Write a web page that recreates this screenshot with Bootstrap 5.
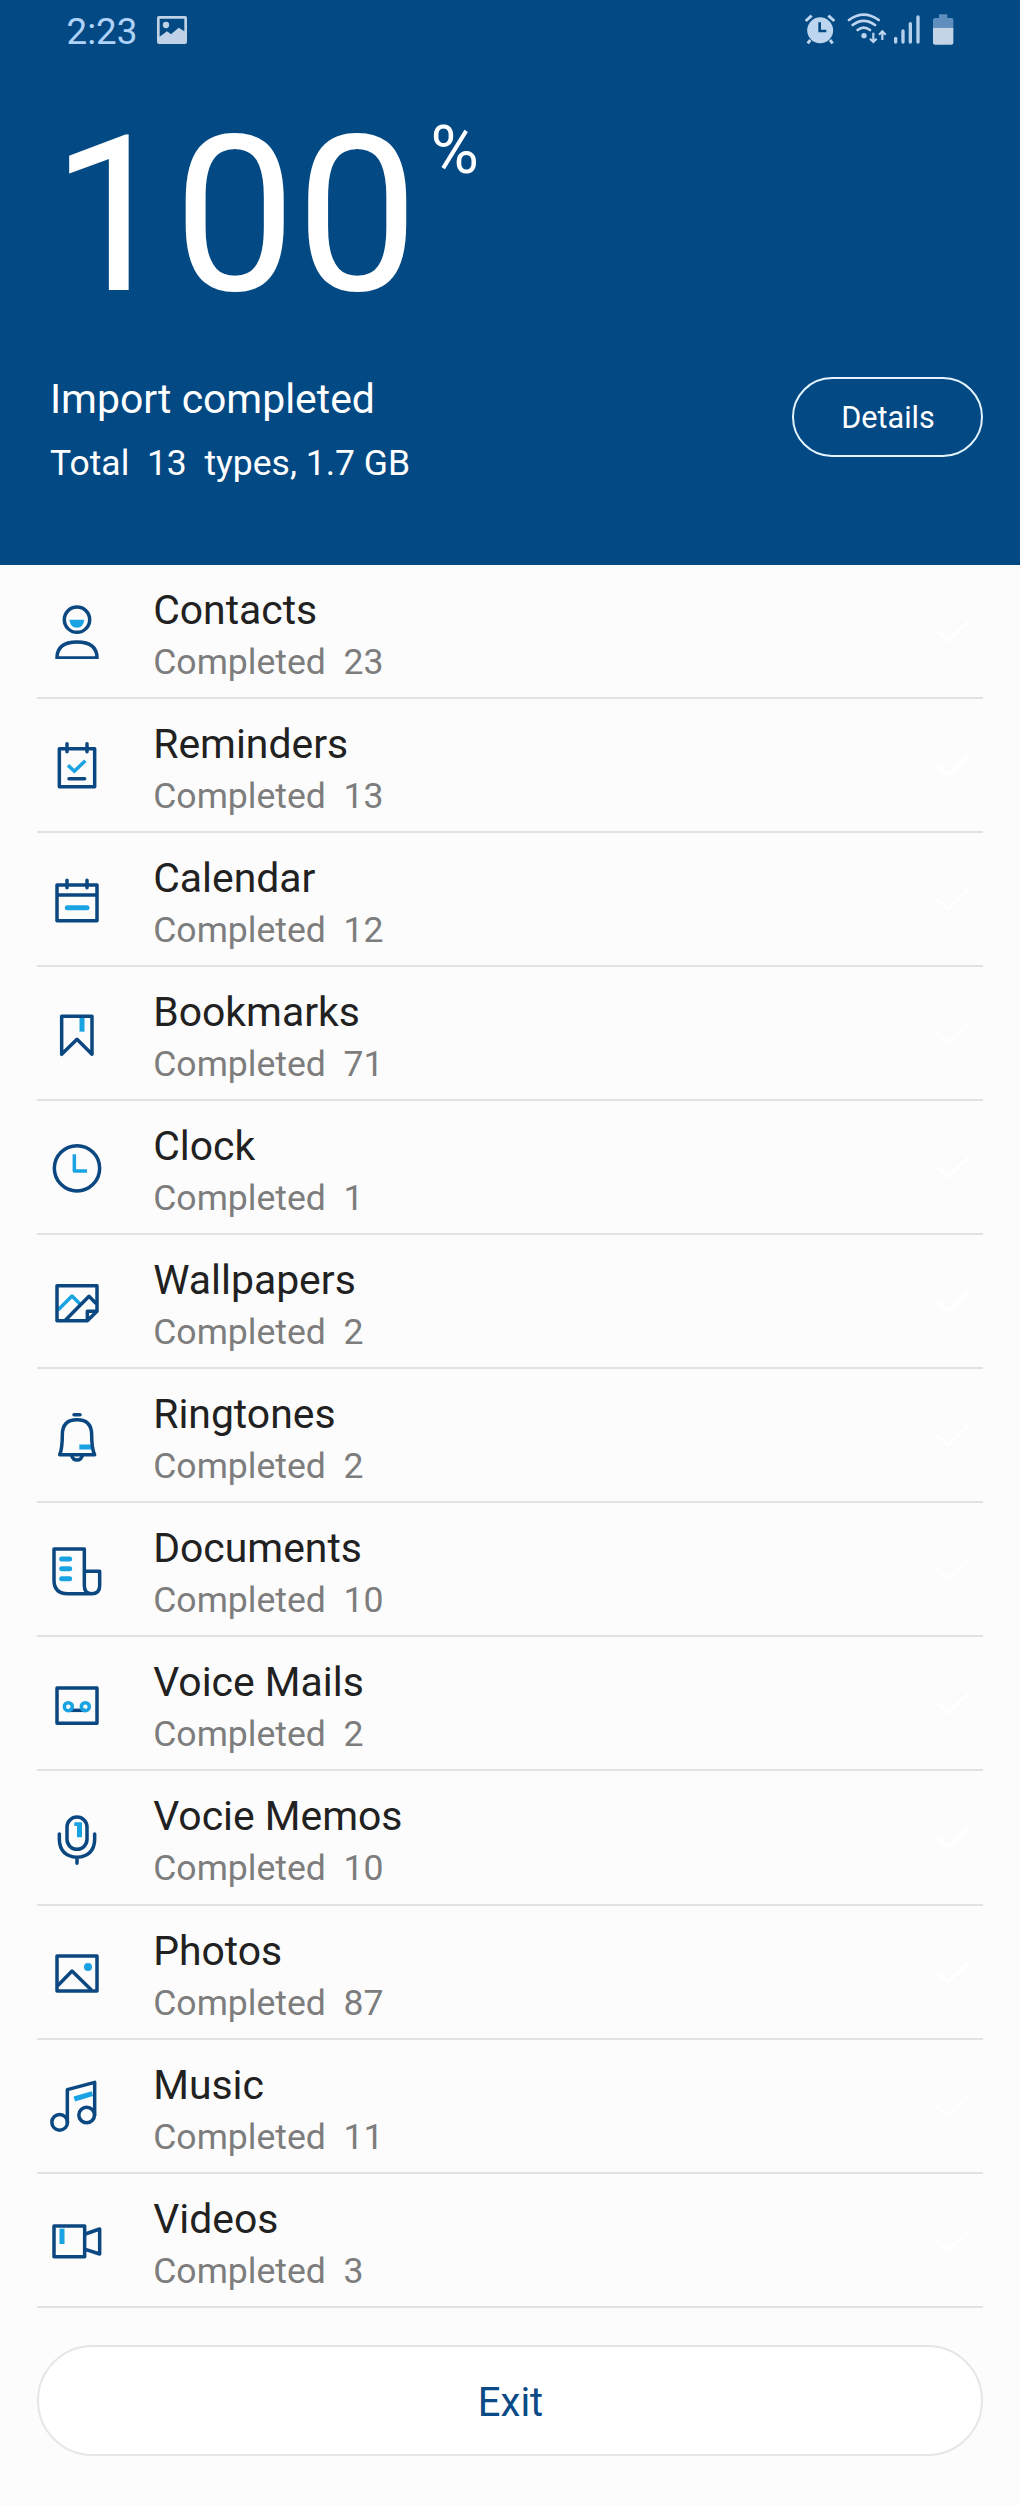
<!DOCTYPE html>
<html lang="en">
<head>
<meta charset="utf-8">
<meta name="viewport" content="width=device-width, initial-scale=1">
<title>Import completed</title>
<link href="https://cdn.jsdelivr.net/npm/bootstrap@5.3.0/dist/css/bootstrap.min.css" rel="stylesheet">
<style>
  body { font-family: Roboto, "Liberation Sans", sans-serif; background: #fcfcfc; overflow-x: hidden; }
  svg { display: block; flex: none; }
  .hero { background: #034984; color: #fff; height: 564.5px; }
  .status-bar { height: 63px; padding: 0 66px 0 66.5px; color: #aed2f8; }
  .clock-text { font-size: 36.8px; line-height: 63px; }
  .status-icons { padding-top: 13.3px; }
  .status-icons .wifi { margin-left: 11px; }
  .status-icons .bars { margin-left: 6.6px; }
  .status-icons .battery { margin-left: 10.7px; }
  .pic-icon { margin: 15.7px 0 0 19.4px; }
  .percent { padding-left: 51px; margin-top: 43px; }
  .percent-num { font-size: 218px; line-height: 220px; }
  .percent-sign { font-size: 66px; line-height: 66px; margin: 12px 0 0 12px; }
  .summary { padding: 0 37px 0 50px; margin-top: 46px; }
  .summary-title { font-size: 40.9px; line-height: 54px; }
  .summary-total { font-size: 35.5px; line-height: 50px; margin-top: 12px; white-space: pre; }
  .btn-details { --bs-btn-color: #fff; --bs-btn-border-color: #e4f4ff; --bs-btn-border-width: 2px; --bs-btn-font-size: 30.6px;
    width: 191px; height: 80px; margin-top: 5.3px; padding: 3px 0 0 1px; line-height: 1.2; }
  .type-list { padding: 0 37px; }
  .type-row { height: 134.12px; border: 0; border-bottom: 2px solid #e2e2e2; background: transparent; padding: 18px 12px 0 12px; }
  .type-row > .type-icon { width: 56px; height: 56px; margin: 20.5px 48.2px 0 0; }
  .type-name { font-size: 40.9px; line-height: 54px; color: #212121; }
  .type-state { font-size: 35.6px; line-height: 50.4px; color: #7d7d7d; white-space: pre; }
  .type-check { margin-top: 35px; }
  .type-icon { fill: none; stroke: #0b4780; stroke-width: 10.5; stroke-linejoin: round; stroke-linecap: butt; }
  .type-icon .hi { stroke: #1aa3e2; }
  .type-icon .wide { stroke-width: 15; }
  .type-icon .hi-fill { fill: #1aa3e2; stroke: none; }
  .rc { stroke-linecap: round; }
  .footer-bar { padding: 37px 37px 50px; }
  .btn-exit { --bs-btn-color: #0a4a86; --bs-btn-bg: #fff; --bs-btn-border-color: #e6e6e6; --bs-btn-border-width: 2px; --bs-btn-font-size: 40px;
    height: 111px; padding: 6px 0 0 1px; line-height: 1.2; }
</style>
</head>
<body>
<header class="hero d-flex flex-column">
  <div class="status-bar d-flex justify-content-between align-items-start">
    <div class="d-flex align-items-start">
      <span class="clock-text">2:23</span>
      <svg class="pic-icon" width="30" height="28" viewBox="0 0 90 84"><path fill="#bfd2e6" fill-rule="evenodd" d="M6 0H84Q90 0 90 6V78Q90 84 84 84H6Q0 84 0 78V6Q0 0 6 0ZM8 8V62L30 46L42 55L65 35L82 46V8Z"/><circle cx="27" cy="27" r="9.5" fill="#bfd2e6"/></svg>
    </div>
    <div class="status-icons d-flex">
      <svg width="32" height="32" viewBox="71 40 96 96"><g fill="none" stroke="#bdd5ee" stroke-width="9"><path d="M76 64L94 48M162 64L144 48M90 121L82 131M149 121L157 131"/></g><circle cx="119.500" cy="92" r="39" fill="#bdd5ee"/><path d="M118 68V94H138" fill="none" stroke="#034984" stroke-width="8"/></svg>
      <svg class="wifi" width="40" height="32" viewBox="200 40 120 96"><g fill="none" stroke="#bdd5ee" stroke-width="8" stroke-linecap="round"><path d="M206 61Q250 29 295 61M217 76Q250 51 284 76M232 91Q250 77 269 91"/></g><circle cx="251" cy="108" r="8" fill="#bdd5ee"/><path d="M279 99V126M269 117L279 127L289 117M306 121V96M296 105L306 95L316 105" fill="none" stroke="#bdd5ee" stroke-width="6.500"/></svg>
      <svg class="bars" width="28" height="32" viewBox="340 40 84 96"><path d="M348 116V127M370 94V127M392 72V127M415 52V127" stroke="#b4d0ed" stroke-width="10" stroke-linecap="round"/></svg>
      <svg class="battery" width="22" height="32" viewBox="456 40 66 96"><path d="M477 44H502V55H514Q520 55 520 61V84H459V61Q459 55 465 55H477Z" fill="#5f8fbe"/><path d="M459 84H520V129Q520 135 514 135H465Q459 135 459 129Z" fill="#c3d4e6"/></svg>
    </div>
  </div>
  <div class="percent d-flex align-items-start">
    <span class="percent-num">100</span><span class="percent-sign">%</span>
  </div>
  <div class="summary d-flex justify-content-between align-items-start">
    <div>
      <div class="summary-title">Import completed</div>
      <div class="summary-total">Total  13  types, 1.7 GB</div>
    </div>
    <button type="button" class="btn btn-details rounded-pill">Details</button>
  </div>
</header>

<main class="type-list list-group rounded-0" id="typeList"></main>

<footer class="footer-bar">
  <button type="button" class="btn btn-exit rounded-pill w-100">Exit</button>
</footer>

<script>
  // name, item count, top of the icon's drawing area, icon shapes
  const types = [
    ['Contacts', 23, 67, '<circle cx="140" cy="117" r="38"/><path d="M80 232Q80 184 140 184Q200 184 200 232Z"/><path class="hi-fill" d="M117 117H162Q159 141 140 141Q120 141 117 117Z"/>'],
    ['Reminders', 13, 470, '<path d="M87 505H193V619H87Z"/><path class="rc" d="M110 490V514M170 490V514M116 595H163"/><path class="hi" d="M113 555L132 573L165 541"/>'],
    ['Calendar', 12, 872, '<path d="M80 914H200V1021H80ZM80 944H200"/><path class="rc" d="M110 900V922M170 900V922"/><path class="hi wide rc" d="M111 982H170"/>'],
    ['Bookmarks', 71, 1275, '<path class="hi wide" d="M155 1312V1355"/><path d="M94 1309H185V1423L140 1378L94 1423Z"/>'],
    ['Clock', 1, 117, '<circle cx="140" cy="205" r="68"/><path class="hi" d="M132 163V213H170"/>'],
    ['Wallpapers', 2, 519, '<path class="hi" d="M83 627L125 585L149 609"/><path d="M105 658L176 586L198 608"/><path d="M80 554H200V631L171 659H80ZM200 631H171V659"/>'],
    ['Ringtones', 2, 922, '<path class="rc" d="M131 942H149"/><path class="hi wide" d="M147 1039H183"/><path d="M88 1062Q96 1044 96 1002Q96 957 140 957Q184 957 184 1002Q184 1044 193 1062Z"/><path d="M124 1064Q127 1078 140 1078Q153 1078 156 1064"/>'],
    ['Documents', 10, 124, '<path d="M71 145H162V255Q162 279 184 279H112Q71 279 71 238ZM162 212H208V255Q208 279 184 279"/><path class="hi wide rc" d="M94 175H118M94 204H118M94 234H118"/>'],
    ['Voice Mails', 2, 526, '<path d="M80 562H200V668H80Z"/><path d="M116 629H165"/><circle class="hi" cx="114" cy="618" r="12"/><circle class="hi" cx="165" cy="618" r="12"/>'],
    ['Vocie Memos', 10, 928, '<rect x="110" y="949" width="60" height="97" rx="30"/><path class="rc" d="M87 1000V1018Q89 1066 140 1070Q191 1066 193 1018V1000M140 1070V1088"/><path class="hi-fill" d="M132 965H155V1010H140V976H132Z"/>'],
    ['Photos', 87, 131, '<path d="M80 167H200V272H80Z"/><path d="M82 256L125 212L184 270"/><circle class="hi-fill" cx="173" cy="200" r="12"/>'],
    ['Music', 11, 533, '<path class="hi wide" d="M132 596L186 580"/><circle cx="88" cy="666" r="23.500"/><circle cx="169" cy="644" r="23.500"/><path d="M111 668V568L193 546V646"/>'],
    ['Videos', 3, 935, '<path d="M71 977H163V1069H71ZM165 1001L208 986V1061L165 1047"/><path class="hi wide" d="M95 985V1031"/>']
  ];
  document.getElementById('typeList').innerHTML = types.map(([name, count, top, shapes]) => `
    <div class="type-row list-group-item d-flex align-items-start">
      <svg class="type-icon" viewBox="56 ${top} 168 168">${shapes}</svg>
      <div class="flex-grow-1">
        <div class="type-name">${name}</div>
        <div class="type-state">Completed  ${count}</div>
      </div>
      <svg class="type-check" width="36" height="27" viewBox="0 0 36 27"><path d="M2 13L13 23L34 3" fill="none" stroke="#fff" stroke-width="3.500"/></svg>
    </div>`).join('');
</script>
<script src="https://cdn.jsdelivr.net/npm/bootstrap@5.3.0/dist/js/bootstrap.bundle.min.js"></script>
</body>
</html>
